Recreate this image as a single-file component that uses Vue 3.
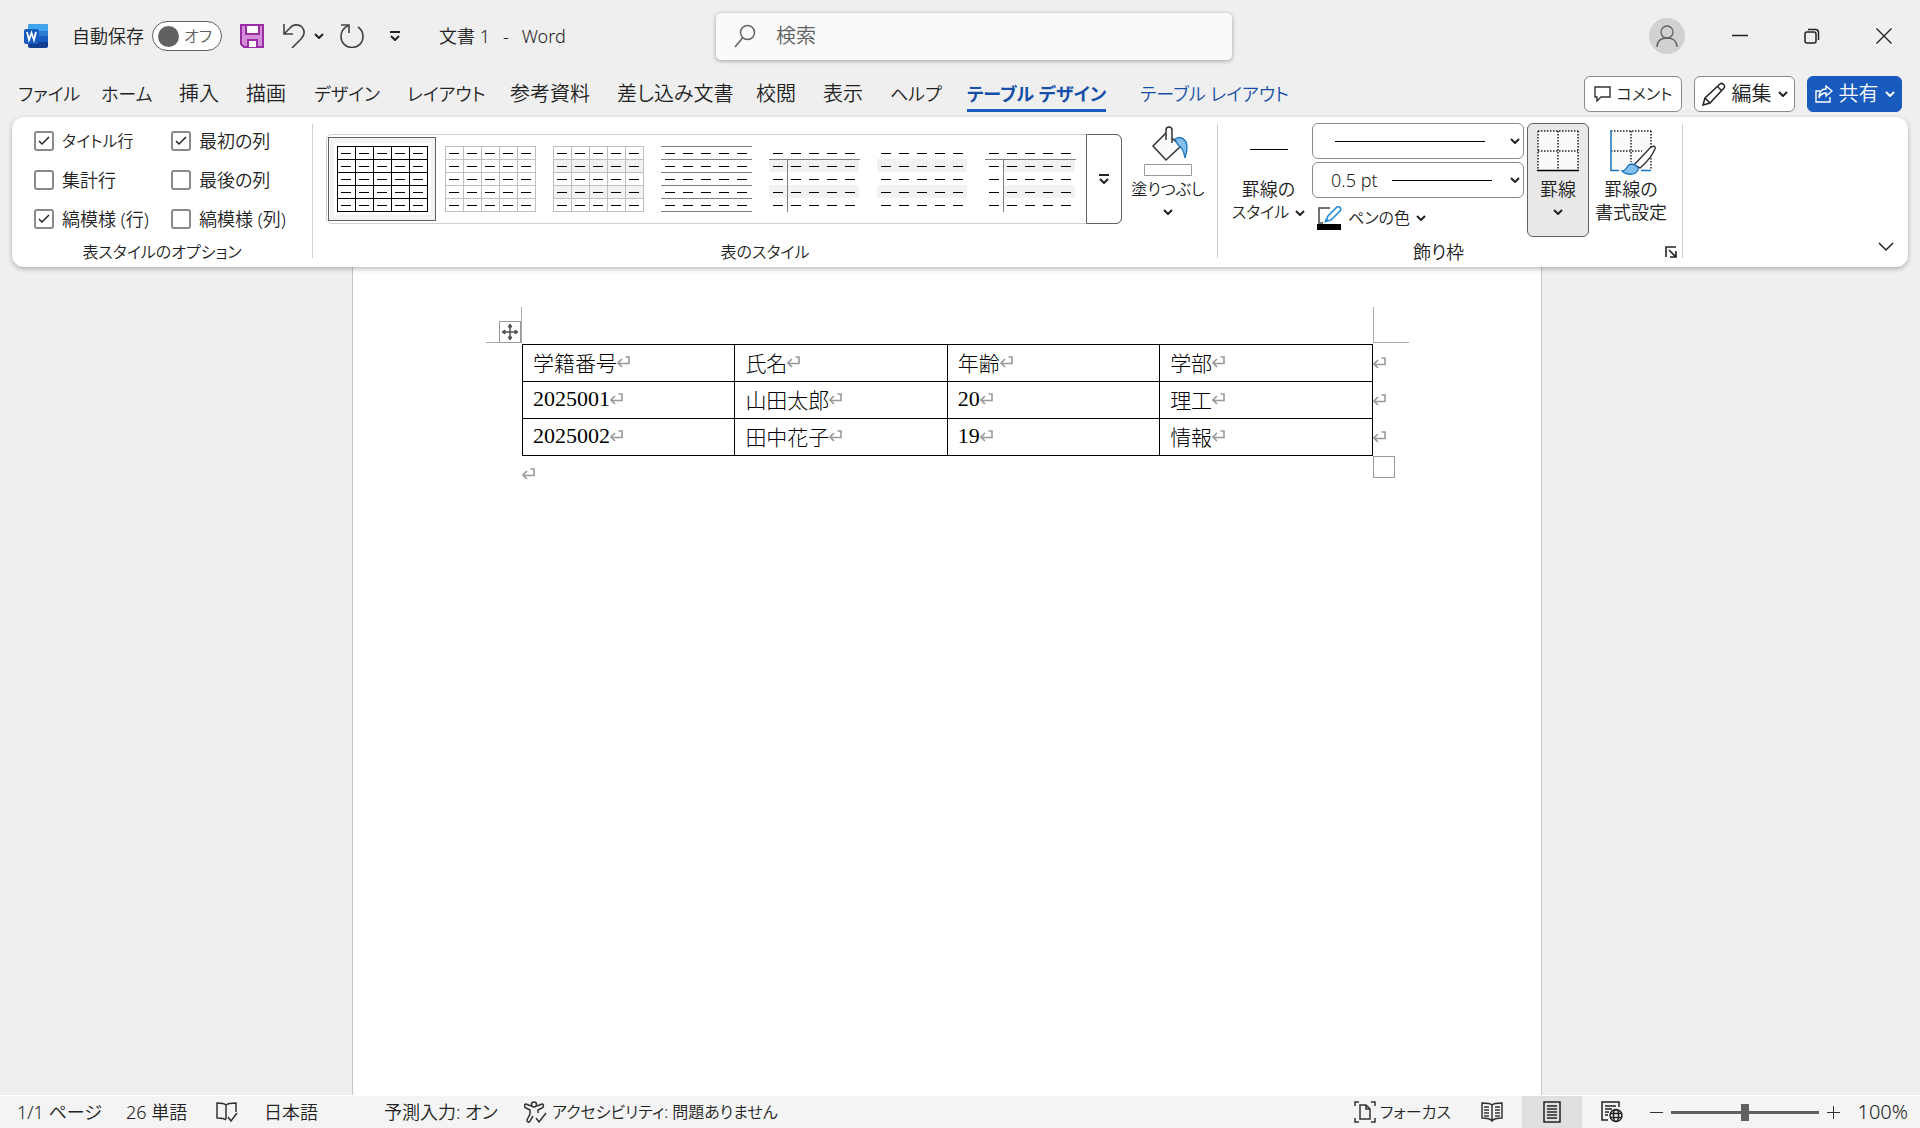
<script setup>
import { ref } from 'vue'

const query = ref('')
const autosave = ref(false)
const zoom = ref(100)

const tabs = [
  { label: 'ファイル', kind: 'kana' },
  { label: 'ホーム', kind: 'kana' },
  { label: '挿入' },
  { label: '描画' },
  { label: 'デザイン', kind: 'kana' },
  { label: 'レイアウト', kind: 'kana' },
  { label: '参考資料' },
  { label: '差し込み文書' },
  { label: '校閲' },
  { label: '表示' },
  { label: 'ヘルプ', kind: 'kana' },
  { label: 'テーブル デザイン', kind: 'kana active' },
  { label: 'テーブル レイアウト', kind: 'kana context' },
]

const options = ref([
  { id: 'header-row', label: 'タイトル行', on: true, small: true },
  { id: 'first-col', label: '最初の列', on: true },
  { id: 'total-row', label: '集計行', on: false },
  { id: 'last-col', label: '最後の列', on: false },
  { id: 'banded-rows', label: '縞模様 (行)', on: true },
  { id: 'banded-cols', label: '縞模様 (列)', on: false },
])

const all = [0, 1, 2, 3, 4, 5]
const thumbs = [
  { name: '表 (格子)', stroke: '#000', h: all, v: all, band: -1, selected: true },
  { name: '表 (格子) 淡色', stroke: '#bfbfbf', h: all, v: all, band: -1 },
  { name: '標準の表 1', stroke: '#bfbfbf', h: all, v: all, band: 0 },
  { name: '標準の表 2', stroke: '#7f7f7f', h: all, v: [], band: -1 },
  { name: '標準の表 3', stroke: '#7f7f7f', h: [1], v: [1], band: 0, from: 1 },
  { name: '標準の表 4', stroke: '#7f7f7f', h: [], v: [], band: 0 },
  { name: '標準の表 5', stroke: '#7f7f7f', h: [1], v: [1], band: 18, from: 1 },
]

const headers = ['学籍番号', '氏名', '年齢', '学部']
const rows = [
  ['2025001', '山田太郎', '20', '理工'],
  ['2025002', '田中花子', '19', '情報'],
]
const isNumber = (s) => /^\d+$/.test(s)
</script>

<template>
  <div class="app">
    <header class="titlebar">
      <div class="quick">
        <svg class="logo" width="24" height="24" viewBox="0 0 24 24">
          <rect x="4" y="0" width="20" height="24" rx="2" fill="#103f91" />
          <path d="M4 12h20v6H4z" fill="#185abd" />
          <path d="M4 6h20v6H4z" fill="#2b7cd3" />
          <path d="M6 0h16a2 2 0 0 1 2 2v5H4V2a2 2 0 0 1 2-2z" fill="#41a5ee" />
          <rect x="0" y="5" width="15" height="15" rx="2" fill="#185abd" />
          <path d="M3 8l2 8 2.500-7 2.500 7 2-8" fill="none" stroke="#fff" stroke-width="1.800" />
        </svg>
        <label class="autosave">
          <span>自動保存</span>
          <span class="toggle">
            <input v-model="autosave" type="checkbox" />
            <span class="knob"></span>
            <span>オフ</span>
          </span>
        </label>
        <button class="bare save" aria-label="保存">
          <svg width="24" height="24" viewBox="0 0 24 24">
            <path d="M1 1h22v22H4l-3-3z" fill="#d28fd8" stroke="#9a2da4" stroke-width="2" />
            <path d="M6 1h13v9H6z" fill="#fafafa" stroke="#9a2da4" stroke-width="2" />
            <path d="M8 23v-7h9v7" fill="#fafafa" stroke="#9a2da4" stroke-width="2" />
          </svg>
        </button>
        <button class="bare undo" aria-label="元に戻す">
          <svg width="24" height="24" viewBox="0 0 24 24" fill="none" stroke="#444" stroke-width="1.600">
            <path d="M2 0v10h9M2 10l6-6c3-4 9-4 12-1 3 4 3 8-1 12l-9 9" />
          </svg>
          <svg class="chev" width="10" height="6" viewBox="0 0 10 6"><path d="M1 1l4 4 4-4" /></svg>
        </button>
        <button class="bare redo" aria-label="やり直し">
          <svg width="24" height="24" viewBox="0 0 24 24" fill="none" stroke="#444" stroke-width="1.600">
            <path d="M1 1h8v8M8.500 1.500C3 4 1 8 1 13a11 10.500 0 0 0 22 0c0-4-2-8-5-10" />
          </svg>
        </button>
        <button class="bare" aria-label="クイック アクセス ツール バーのカスタマイズ">
          <svg class="chev" width="12" height="10" viewBox="0 0 12 10"><path d="M1 1h10M2 5l4 4 4-4" /></svg>
        </button>
        <h1>文書 1<span class="dash">-</span>Word</h1>
      </div>
      <label class="search">
        <svg width="22" height="24" viewBox="0 0 22 24" fill="none" stroke="#616161" stroke-width="1.500">
          <circle cx="13.500" cy="8.500" r="7" /><path d="M8.500 14L1 23" />
        </svg>
        <input v-model="query" type="search" placeholder="検索" aria-label="検索" />
      </label>
      <div class="window">
        <button class="avatar" aria-label="アカウント">
          <svg width="36" height="36" viewBox="0 0 36 36" fill="none" stroke="#616161" stroke-width="1.300">
            <circle cx="18" cy="14" r="6" /><path d="M8 29c0-6 4-9 10-9s10 3 10 9" />
          </svg>
        </button>
        <button class="bare" aria-label="最小化">
          <svg width="16" height="16" viewBox="0 0 16 16" fill="none" stroke="#222" stroke-width="1.500"><path d="M0 7.500h16" /></svg>
        </button>
        <button class="bare" aria-label="元のサイズに戻す">
          <svg width="16" height="16" viewBox="0 0 16 16" fill="none" stroke="#222" stroke-width="1.500">
            <rect x="1" y="4" width="11" height="11" rx="2" /><path d="M4 1.500h7.500a3 3 0 0 1 3 3V12" />
          </svg>
        </button>
        <button class="bare" aria-label="閉じる">
          <svg width="16" height="16" viewBox="0 0 16 16" fill="none" stroke="#222" stroke-width="1.400"><path d="M0.500 0.500l15 15M15.500 0.500l-15 15" /></svg>
        </button>
      </div>
    </header>

    <div class="tabbar">
      <nav class="tabs">
        <button v-for="t in tabs" :key="t.label" class="tab" :class="t.kind">{{ t.label }}</button>
      </nav>
      <div class="actions">
        <button class="action comment">
          <svg width="17" height="16" viewBox="0 0 17 16" fill="none" stroke="#333" stroke-width="1.400"><path d="M1 1h15v10H7l-4 4v-4H1z" /></svg>
          <span>コメント</span>
        </button>
        <button class="action edit">
          <svg width="24" height="24" viewBox="0 0 24 24" fill="none" stroke="#222" stroke-width="1.500"><path d="M1 23l2-7L18 2c2-2 6 2 4 4L8 21zM3 16l5 5M15.500 4.500l4 4" /></svg>
          <span>編集</span>
          <svg class="chev" width="10" height="6" viewBox="0 0 10 6"><path d="M1 1l4 4 4-4" /></svg>
        </button>
        <button class="action share">
          <svg width="18" height="18" viewBox="0 0 18 18" fill="none" stroke="#fff" stroke-width="1.400"><path d="M5 6H1v11h14v-5M11 1l6 5-6 5V8c-4 0-6 2-7 5 0-6 3-9 7-9z" /></svg>
          <span>共有</span>
          <svg class="chev light" width="10" height="6" viewBox="0 0 10 6"><path d="M1 1l4 4 4-4" /></svg>
        </button>
      </div>
    </div>

    <section class="ribbon">
      <div class="group g-options">
        <div class="body checks">
          <label v-for="o in options" :key="o.id" :for="o.id" class="check">
            <input :id="o.id" v-model="o.on" type="checkbox" />
            <span :class="{ small: o.small }">{{ o.label }}</span>
          </label>
        </div>
        <div class="caption small">表スタイルのオプション</div>
      </div>

      <div class="group g-styles">
        <div class="body">
          <div class="gallery">
            <button v-for="t in thumbs" :key="t.name" class="thumb" :class="{ selected: t.selected }" :aria-label="t.name">
              <svg width="91" height="66" viewBox="0 0 91 66" shape-rendering="crispEdges">
                <template v-if="t.band >= 0">
                  <rect v-for="y in [13, 39]" :key="y" :x="t.band" :y="y" :width="90 - t.band" height="13" fill="#f2f2f2" />
                </template>
                <rect v-for="i in t.h" :key="'h' + i" x="0" :y="i * 13" width="91" height="1" :fill="t.stroke" />
                <rect v-for="i in t.v" :key="'v' + i" :x="i * 18" :y="(t.from || 0) * 13" width="1" :height="66 - (t.from || 0) * 13" :fill="t.stroke" />
                <template v-for="r in 5" :key="'r' + r">
                  <rect v-for="c in 5" :key="c" :x="c * 18 - 14" :y="r * 13 - 6" width="10" height="1" fill="#000" />
                </template>
              </svg>
            </button>
            <button class="more" aria-label="その他">
              <svg class="chev" width="12" height="10" viewBox="0 0 12 10"><path d="M1 1h10M2 5l4 4 4-4" /></svg>
            </button>
          </div>
          <button class="big fill">
            <svg width="48" height="50" viewBox="0 0 48 50">
              <path d="M9 20L22 7l15 13-15 14z" fill="#fafafa" stroke="#333" stroke-width="1.500" />
              <path d="M31 13c6-4 12 1 12 8 0 4-1 8-2 11-1-6-3-11-7-13z" fill="#83beec" stroke="#1a75bf" stroke-width="1.300" />
              <path d="M22 14V4c0-4 6-4 6 0v13" fill="#fafafa" stroke="#333" stroke-width="1.500" />
              <path d="M0.500 38.500h47v11h-47z" fill="#fff" stroke="#999" />
            </svg>
            <span class="small">塗りつぶし</span>
            <svg class="chev" width="10" height="6" viewBox="0 0 10 6"><path d="M1 1l4 4 4-4" /></svg>
          </button>
        </div>
        <div class="caption small">表のスタイル</div>
      </div>

      <div class="group g-borders">
        <div class="body">
          <button class="big bstyle">
            <svg width="48" height="50" viewBox="0 0 48 50"><path d="M5 23.500h38" stroke="#000" /></svg>
            <span>罫線の</span>
            <span class="line small">スタイル<svg class="chev" width="10" height="6" viewBox="0 0 10 6"><path d="M1 1l4 4 4-4" /></svg></span>
          </button>
          <div class="pens">
            <div class="drop">
              <select aria-label="ペンのスタイル"><option></option></select>
              <span class="rule rule-wide"></span>
              <svg class="chev" width="10" height="6" viewBox="0 0 10 6"><path d="M1 1l4 4 4-4" /></svg>
            </div>
            <div class="drop">
              <select aria-label="ペンの太さ"><option>0.5 pt</option></select>
              <span class="rule"></span>
              <svg class="chev" width="10" height="6" viewBox="0 0 10 6"><path d="M1 1l4 4 4-4" /></svg>
            </div>
            <button class="bare pencolor">
              <svg width="26" height="24" viewBox="0 0 26 24">
                <path d="M14 2H3v15h4" fill="none" stroke="#444" stroke-width="1.500" />
                <path d="M10 15l2-5 9-9c2-1 5 1 3 4l-9 9z" fill="#fff" stroke="#2b8fd6" stroke-width="1.700" />
                <path d="M8 17l2-5 3 3z" fill="#2b8fd6" />
                <path d="M1 18h24v6H1z" />
              </svg>
              <span class="small">ペンの色</span>
              <svg class="chev" width="10" height="6" viewBox="0 0 10 6"><path d="M1 1l4 4 4-4" /></svg>
            </button>
          </div>
          <button class="big borders">
            <svg width="42" height="42" viewBox="0 0 42 42">
              <path d="M1 1h40v40H1z" fill="#fafafa" />
              <path d="M1 1h40M1 21h40M1 1v39M21 1v39M41 1v39" fill="none" stroke="#222" stroke-width="1.500" stroke-dasharray="1.500 1.500" />
              <path d="M0 40.500h42" stroke="#000" stroke-width="1.500" />
            </svg>
            <span>罫線</span>
            <svg class="chev" width="10" height="6" viewBox="0 0 10 6"><path d="M1 1l4 4 4-4" /></svg>
          </button>
          <button class="big painter">
            <svg width="46" height="46" viewBox="0 0 46 46">
              <path d="M1 1h40v40H1z" fill="#fafafa" />
              <path d="M1 1h40M1 21h31M21 1v31M41 1v39" fill="none" stroke="#222" stroke-width="1.500" stroke-dasharray="1.500 1.500" />
              <path d="M1 0v40.500h8M31 40.500h10" fill="none" stroke="#1a75bf" stroke-width="1.500" />
              <path d="M24 35L40 18c2-2 6-3 5 1-3 7-8 13-15 19z" fill="#fff" stroke="#333" stroke-width="1.400" />
              <path d="M12 41c5 0 4-6 9-7 4 0 8 3 7 6-3 6-12 5-16 1z" fill="#83beec" stroke="#1a75bf" stroke-width="1.300" />
            </svg>
            <span>罫線の</span>
            <span>書式設定</span>
          </button>
        </div>
        <div class="caption launch">
          <span>飾り枠</span>
          <button class="bare" aria-label="線種とページ罫線の設定">
            <svg width="12" height="12" viewBox="0 0 12 12" fill="none" stroke="#222" stroke-width="1.600"><path d="M1 11V1h10M4 4l7 7M11 5v6H5" /></svg>
          </button>
        </div>
      </div>
      <button class="bare collapse" aria-label="リボンを折りたたむ">
        <svg class="chev" width="16" height="10" viewBox="0 0 16 10"><path d="M1 1l7 7 7-7" /></svg>
      </button>
    </section>

    <main class="canvas">
      <article class="page">
        <div class="margins">
          <span class="corner left"></span>
          <button class="bare move" aria-label="表の移動">
            <svg width="18" height="18" viewBox="0 0 18 18" fill="#505050" stroke="#505050"><path d="M9 2v14M2 9h14" stroke-width="1.500" /><path d="M9 1l2 3H7zM9 17l2-3H7zM1 9l3-2v4zM17 9l-3-2v4z" stroke-width="1" /></svg>
          </button>
          <span class="corner"></span>
        </div>
        <table>
          <thead>
            <tr>
              <th v-for="h in headers" :key="h" scope="col"><span class="cell">{{ h }}<svg class="mark" width="13" height="12" viewBox="0 0 13 12"><path d="M5 3L1 7l4 4M1 7.500h11V1H8.500" /></svg></span></th>
              <td class="end"><svg class="mark" width="13" height="12" viewBox="0 0 13 12"><path d="M5 3L1 7l4 4M1 7.500h11V1H8.500" /></svg></td>
            </tr>
          </thead>
          <tbody>
            <tr v-for="r in rows" :key="r[0]">
              <td v-for="c in r" :key="c" :class="{ num: isNumber(c) }"><span class="cell">{{ c }}<svg class="mark" width="13" height="12" viewBox="0 0 13 12"><path d="M5 3L1 7l4 4M1 7.500h11V1H8.500" /></svg></span></td>
              <td class="end"><svg class="mark" width="13" height="12" viewBox="0 0 13 12"><path d="M5 3L1 7l4 4M1 7.500h11V1H8.500" /></svg></td>
            </tr>
          </tbody>
        </table>
        <div class="after">
          <svg class="mark" width="13" height="12" viewBox="0 0 13 12"><path d="M5 3L1 7l4 4M1 7.500h11V1H8.500" /></svg>
          <span class="resize"></span>
        </div>
      </article>
    </main>

    <footer class="status">
      <div class="facts">
        <span>1/1 ページ</span>
        <span>26 単語</span>
        <svg width="22" height="22" viewBox="0 0 22 22" fill="none" stroke="#333" stroke-width="1.500"><path d="M10 18V4C8 2 5 2 1 2v15c4 0 7 0 9 2M10 4c2-2 5-2 10-2v9M12 16l3 4 6-8" /></svg>
        <span>日本語</span>
        <span>予測入力: オン</span>
        <span class="access">
          <svg width="24" height="22" viewBox="0 0 24 22" fill="none" stroke="#333" stroke-width="1.500"><circle cx="10" cy="3.500" r="2.500" /><path d="M7 5L2 3C0 3 0 6 2 7l4 2v4l-3 6c0 2 2 3 3 1l3-5M13 5l5-2c2 0 2 3 0 4l-4 2v3M12 17l3 4 7-9" /></svg>
          <span class="small">アクセシビリティ: 問題ありません</span>
        </span>
      </div>
      <div class="views">
        <button class="bare focus">
          <svg width="22" height="22" viewBox="0 0 22 22" fill="none" stroke="#333" stroke-width="1.500"><path d="M5 1H1v4M17 1h4v4M5 21H1v-4M17 21h4v-4M6 4h6l4 4v10H6zM12 4v4h4" /></svg>
          <span class="small">フォーカス</span>
        </button>
        <button class="bare view" aria-label="閲覧モード">
          <svg width="22" height="20" viewBox="0 0 22 20" fill="none" stroke="#333" stroke-width="1.500"><path d="M11 18V3C9 1 5 1 1 1v15c4 0 8 0 10 3 2-3 6-3 10-3V1c-4 0-8 0-10 2M3 5h5M3 8h5M3 11h5M3 14h5M14 5h5M14 8h5M14 11h5M14 14h5" /></svg>
        </button>
        <button class="bare view on" aria-label="印刷レイアウト">
          <svg width="18" height="22" viewBox="0 0 18 22" fill="none" stroke="#222" stroke-width="1.500"><path d="M1 1h16v20H1zM4 5h10M4 8h10M4 11h10M4 14h10M4 17h10" /></svg>
        </button>
        <button class="bare view" aria-label="Web レイアウト">
          <svg width="22" height="22" viewBox="0 0 22 22" fill="none" stroke="#222" stroke-width="1.500"><path d="M7 19H1V1h17v5M4 5h11M4 8h7M4 11h4M4 14h3" /><circle cx="15" cy="14.500" r="6" /><ellipse cx="15" cy="14.500" rx="2.500" ry="6" /><path d="M9 12.500h12M9 16.500h12" /></svg>
        </button>
        <div class="zoom">
          <button class="bare" aria-label="縮小"><svg width="13" height="13" viewBox="0 0 13 13" stroke="#333"><path d="M0 6.500h13" /></svg></button>
          <input v-model="zoom" type="range" min="10" max="190" aria-label="ズーム" />
          <button class="bare" aria-label="拡大"><svg width="13" height="13" viewBox="0 0 13 13" stroke="#333"><path d="M0 6.500h13M6.500 0v13" /></svg></button>
          <output>{{ zoom }}%</output>
        </div>
      </div>
    </footer>
  </div>
</template>

<style>
body {
  background: #efefef;
}
</style>

<style scoped>
.app {
  display: flex;
  flex-direction: column;
  min-height: 100vh;
  background: #efefef;
  color: #222;
  font-family: "Noto Sans", "Noto Sans CJK JP", sans-serif;
  font-size: 18px;
  font-weight: 350;
  line-height: 24px;
  font-feature-settings: "palt";
  white-space: nowrap;
}
.app * {
  box-sizing: border-box;
}
button,
input,
select {
  margin: 0;
  padding: 0;
  border: 0;
  background: none;
  color: inherit;
  font: inherit;
  font-feature-settings: inherit;
}
svg {
  display: block;
  flex: none;
}
.bare {
  display: flex;
  align-items: center;
}
.small {
  font-size: 16px;
}
.chev {
  fill: none;
  stroke: #222;
  stroke-width: 2;
}
.chev.light {
  stroke: #fff;
}

/* title bar */
.titlebar {
  display: grid;
  grid-template-columns: 1fr 516px 1fr;
  align-items: center;
  height: 72px;
  padding: 0 0 0 24px;
}
.quick {
  display: flex;
  align-items: center;
}
.autosave {
  display: flex;
  align-items: center;
  gap: 8px;
  margin-left: 24px;
}
.toggle {
  display: flex;
  align-items: center;
  justify-content: space-between;
  width: 70px;
  height: 30px;
  padding: 0 9px 0 5px;
  border: 1px solid #616161;
  border-radius: 15px;
  background: #fff;
  color: #616161;
  font-size: 16px;
}
.toggle input {
  position: absolute;
  opacity: 0;
}
.knob {
  width: 21px;
  height: 21px;
  border-radius: 50%;
  background: #616161;
}
.save {
  margin-left: 18px;
}
.undo {
  gap: 8px;
  margin-left: 18px;
}
.redo {
  margin: 0 25px 0 16px;
}
h1 {
  margin: 0 0 0 38px;
  font-size: 18px;
  font-weight: 350;
}
.dash {
  margin: 0 13px;
}
.search {
  display: flex;
  align-items: center;
  gap: 20px;
  height: 47px;
  padding: 0 18px;
  margin: 0 -2px 0 2px;
  border-radius: 5px;
  background: #fafafa;
  box-shadow: 0 1px 4px #0005;
}
.search input {
  flex: 1;
  outline: 0;
  font-size: 20px;
}
.search input::placeholder {
  color: #616161;
  opacity: 1;
}
.window {
  display: flex;
  justify-content: flex-end;
  align-items: center;
  gap: 56px;
  padding-right: 28px;
}
.avatar {
  width: 36px;
  height: 36px;
  margin-right: -9px;
  border-radius: 50%;
  background: #d1d1d1;
}

/* tabs */
.tabbar {
  display: flex;
  justify-content: space-between;
  align-items: flex-start;
  height: 45px;
  padding: 4px 18px 0;
}
.tabs {
  display: grid;
  grid-template-columns: 83px 78px 67px 68px 93px 103px 107px 139px 67px 67px 77px 173px auto;
  justify-items: start;
  font-size: 20px;
}
.tab {
  height: 36px;
  border-bottom: 3px solid transparent;
  line-height: 36px;
}
.tab.kana {
  font-size: 18px;
}
.tab.active {
  border-color: #185abd;
  color: #174fa8;
  font-weight: 700;
}
.tab.context {
  color: #174fa8;
}
.actions {
  display: flex;
  gap: 12px;
}
.action {
  display: flex;
  justify-content: center;
  align-items: center;
  gap: 6px;
  height: 36px;
  border: 1px solid #8a8a8a;
  border-radius: 6px;
  background: #fff;
  font-size: 20px;
}
.comment {
  width: 98px;
  font-size: 16px;
}
.edit {
  width: 101px;
}
.share {
  width: 95px;
  border-color: #185abd;
  background: #185abd;
  color: #fff;
}

/* ribbon */
.ribbon {
  display: flex;
  position: relative;
  z-index: 1;
  height: 150px;
  margin: 0 12px;
  border-radius: 12px;
  background: #fff;
  box-shadow: 0 2px 5px #0004;
}
.group {
  display: flex;
  flex-direction: column;
  height: 134px;
  margin-top: 7px;
  border-right: 1px solid #d1d1d1;
}
.body {
  display: flex;
  flex: none;
  height: 116px;
}
.caption {
  text-align: center;
  line-height: 24px;
}
.g-options {
  width: 301px;
}
.checks {
  display: grid;
  grid-template-columns: 137px 130px;
  grid-auto-rows: 39px;
  padding: 0 0 0 22px;
}
.check {
  display: flex;
  align-items: center;
  gap: 8px;
  height: 34px;
}
.check input {
  appearance: none;
  flex: none;
  width: 20px;
  height: 20px;
  border: 2px solid #8a8a8a;
  border-radius: 3px;
}
.check input:checked {
  background: url("data:image/svg+xml,%3Csvg xmlns='http://www.w3.org/2000/svg' viewBox='0 0 16 16'%3E%3Cpath d='M3 8l3 3 7-7' fill='none' stroke='%23222' stroke-width='1.500'/%3E%3C/svg%3E") center / 16px;
}
.g-styles {
  width: 905px;
}
.g-styles .body {
  padding-left: 13px;
}
.gallery {
  display: flex;
  flex: none;
  align-items: center;
  width: 796px;
  height: 90px;
  margin-top: 10px;
  border: 1px solid #d1d1d1;
  border-radius: 6px;
}
.thumb {
  display: flex;
  align-items: flex-start;
  width: 108px;
  height: 84px;
  padding: 9px 0 0 9px;
}
.thumb:first-child {
  margin-left: 1px;
}
.thumb.selected {
  padding: 8px 0 0 8px;
  border: 1px solid #616161;
  background: #f3f3f3;
}
.thumb.selected svg {
  box-shadow: 0 0 0 3px #fff;
  background: #fff;
}
.more {
  display: grid;
  place-items: center;
  width: 36px;
  height: 90px;
  margin: -1px -1px -1px auto;
  border: 1px solid #616161;
  border-radius: 0 6px 6px 0;
}
.big {
  display: flex;
  flex-direction: column;
  align-items: center;
  line-height: 23px;
}
.big > .chev {
  margin-top: 8px;
}
.fill {
  width: 92px;
}
.fill svg:first-child,
.bstyle svg:first-child {
  margin: 2px 0;
}
.g-borders {
  width: 465px;
}
.bstyle {
  width: 94px;
  padding-left: 7px;
}
.line {
  display: flex;
  align-items: center;
  gap: 6px;
}
.pens {
  width: 212px;
}
.drop {
  display: flex;
  align-items: center;
  position: relative;
  height: 36px;
  margin: -1px 0 4px;
  border: 1px solid #8a8a8a;
  border-radius: 6px;
}
.drop select {
  position: absolute;
  inset: 0;
  width: 100%;
  padding-left: 18px;
  appearance: none;
}
.rule {
  width: 100px;
  height: 1px;
  margin: 0 18px 0 auto;
  background: #000;
}
.rule-wide {
  width: 150px;
  margin-right: 25px;
}
.drop .chev {
  margin-right: 3px;
}
.pencolor {
  gap: 6px;
  height: 32px;
  padding-left: 4px;
}
.borders {
  width: 62px;
  height: 114px;
  margin: -1px 0 0 3px;
  padding-top: 6px;
  border: 1px solid #616161;
  border-radius: 6px;
  background: #e8e8e8;
}
.borders svg:first-child {
  margin-bottom: 6px;
}
.painter {
  width: 84px;
  padding-top: 6px;
}
.painter svg:first-child {
  margin: 0 0 2px 3px;
}
.launch {
  display: flex;
  justify-content: space-between;
  padding: 0 5px 0 195px;
}
.collapse {
  align-self: flex-end;
  margin: 0 14px 15px auto;
}
.collapse .chev {
  stroke-width: 1.500;
}

/* document */
.canvas {
  display: flex;
  flex: 1;
  justify-content: center;
  padding-right: 26px;
  border-bottom: 1px solid #fff;
}
.page {
  width: 100%;
  max-width: 1190px;
  padding: 40px 132px 0 133px;
  border: solid #c6c6c6;
  border-width: 0 1px;
  background: #fff;
  color: #000;
}
.margins {
  display: flex;
  position: relative;
  justify-content: space-between;
  height: 36px;
}
.corner {
  width: 36px;
  border: solid #ababab;
  border-width: 0 0 1px 1px;
}
.corner.left {
  border-width: 0 1px 1px 0;
}
.move {
  position: absolute;
  top: 14px;
  left: 13px;
  justify-content: center;
  width: 22px;
  height: 22px;
  border: 1px solid #999;
  background: #fff;
}
table {
  width: calc(100% - 58px);
  margin: 1px 0 0 36px;
  border-collapse: collapse;
  table-layout: fixed;
  font-family: "Noto Sans CJK JP", sans-serif;
  font-size: 21px;
  font-weight: 300;
  font-feature-settings: normal;
}
th,
td {
  height: 37px;
  padding: 0 0 2px 10px;
  border: 1px solid #000;
  font-weight: 300;
  line-height: 30px;
  text-align: left;
}
td.num {
  font-family: "Liberation Serif", serif;
  font-size: 22px;
  font-weight: 400;
}
.cell {
  display: flex;
  align-items: center;
}
td.end {
  width: 15px;
  padding: 0;
  border-width: 0 0 0 1px;
}
.mark {
  fill: none;
  stroke: #999;
  stroke-width: 1.600;
}
.after {
  display: flex;
  justify-content: space-between;
  padding: 0 14px 0 36px;
}
.after .mark {
  margin-top: 12px;
}
.resize {
  width: 22px;
  height: 22px;
  border: 1px solid #999;
}

/* status bar */
.status {
  display: flex;
  justify-content: space-between;
  height: 32px;
  padding: 0 12px 0 17px;
  background: #f4f4f4;
}
.facts {
  display: grid;
  grid-template-columns: 109px 90px 48px 120px 140px auto;
  align-items: center;
}
.access,
.focus {
  gap: 4px;
}
.access {
  display: flex;
  align-items: center;
}
.views {
  display: flex;
}
.focus {
  width: 108px;
}
.view {
  justify-content: center;
  width: 60px;
}
.view.on {
  background: #dfdfdf;
}
.zoom {
  display: flex;
  align-items: center;
  gap: 8px;
  margin-left: 8px;
}
.zoom input {
  appearance: none;
  width: 148px;
  height: 3px;
  background: #616161;
}
.zoom input::-webkit-slider-thumb {
  appearance: none;
  width: 8px;
  height: 17px;
  background: #616161;
}
output {
  width: 60px;
  font-size: 20px;
  text-align: right;
}
</style>
